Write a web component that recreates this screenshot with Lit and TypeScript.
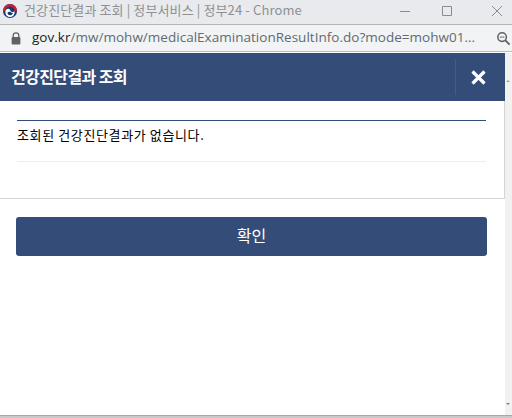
import { LitElement, html, css } from "lit";
import { customElement } from "lit/decorators.js";

@customElement("app-root")
export class AppRoot extends LitElement {
  static styles = css`
    :host { display: flex; flex-direction: column; width: 512px; height: 418px; overflow: hidden; background: #fff; font-family: "Noto Sans CJK KR", "Liberation Sans", sans-serif; }
    .titlebar { height: 24px; flex: none; background: #e8eaed; border-bottom: 1px solid #b4b5b7; display: flex; align-items: center; color: #8e9093; font-size: 13px; box-sizing: content-box; }
    .logo { width: 16px; height: 16px; margin: 0 6px 3px 2px; flex: none; }
    .ttext { flex: 1; white-space: nowrap; letter-spacing: 0.12px; padding-bottom: 6px; }
    .winbtn { width: 16px; height: 16px; flex: none; display: block; margin-bottom: 3px; }
    .min { margin-right: 26px; }
    .max { margin-right: 32px; }
    .cls { margin-right: 7px; }
    .addr { height: 26px; flex: none; background: #f1f3f4; border-bottom: 1px solid #b9babb; display: flex; align-items: center; font-family: "Open Sans", "Liberation Sans", sans-serif; font-size: 13.5px; color: #5f6b73; box-sizing: content-box; }
    .lock { width: 10px; height: 13px; margin: 0 11px 0 11px; flex: none; }
    .url { flex: 1; white-space: nowrap; overflow: hidden; letter-spacing: 0.02px; padding-bottom: 2px; }
    .dom { color: #202124; }
    .zoom { width: 15px; height: 15px; margin-right: 1px; flex: none; }
    .page { flex: 1; min-height: 0; display: flex; background: #fff; padding-top: 1px; }
    .main { flex: 1; min-width: 0; display: flex; flex-direction: column; }
    .side { width: 7px; flex: none; background: #f1f1f1; position: relative; }
    .up { position: absolute; top: 27px; left: 1px; width: 0; height: 0; border: 2.5px solid transparent; border-bottom-color: #a3a3a3; border-top: 0; }
    .down { position: absolute; bottom: 10px; left: 1px; width: 0; height: 0; border: 2.5px solid transparent; border-top-color: #7e7e7e; border-bottom: 0; }
    .card { border-bottom: 1px solid #d4d4d4; border-right: 1px solid #d4d4d4; }
    .head { height: 48px; margin-right: -1px; background: #334c78; display: flex; align-items: center; justify-content: space-between; color: #fff; }
    .head h1 { margin: 0 0 2px 11px; font-size: 16px; font-weight: 700; letter-spacing: -0.6px; }
    .close { width: 50px; height: 36px; border-left: 1px solid #435c88; display: flex; align-items: center; justify-content: center; padding-right: 5px; box-sizing: border-box; }
    .close svg { width: 17px; height: 17px; display: block; }
    .body { padding: 19px 18px 36px 17px; }
    .box { border-top: 1px solid #334c78; border-bottom: 1px solid #eeeeee; height: 40px; font-size: 13px; color: #000; line-height: 27px; box-sizing: content-box; letter-spacing: 0.62px; }
    .foot { padding: 18px 18px 0 16px; }
    button { width: 100%; height: 39px; border: 0; border-radius: 3px; background: #344c78; color: #fff; font: inherit; font-size: 16px; padding: 0 0 3px; }
    .bottom { height: 3px; flex: none; background: #c9c9c9; border-top: 1px solid #a8a8a8; box-sizing: border-box; overflow: hidden; font-size: 13px; font-weight: 700; line-height: 15px; color: #222; padding-left: 10px; white-space: nowrap; }
  `;

  render() {
    return html`
      <div class="titlebar">
        <svg class="logo" viewBox="0 0 16 16">
          <circle cx="8" cy="8" r="7" fill="#173a72"/>
          <path d="M1 8A7 7 0 0 1 15 8L12.6 8A4.6 4.6 0 0 0 3.4 8Z" fill="#c8202f"/>
          <path d="M3.4 8A2.6 2.6 0 0 1 8 6.8 A2.6 2.6 0 0 0 12.6 8 L12.6 9.5 A4.6 4.6 0 0 1 3.4 9.5Z" fill="#fff"/>
          <path d="M5.5 9.5A2.6 2.6 0 0 0 10.8 9.5 A2.2 2.2 0 0 1 8 8.6Z" fill="#173a72"/>
        </svg>
        <span class="ttext">건강진단결과 조회 | 정부서비스 | 정부24 - Chrome</span>
        <svg class="winbtn min" viewBox="0 0 16 16"><path d="M1 8.5H11" stroke="#8a8c8f" fill="none"/></svg>
        <svg class="winbtn max" viewBox="0 0 16 16"><path d="M1.5 3.5H10.5V12.5H1.5Z" stroke="#8a8c8f" fill="none"/></svg>
        <svg class="winbtn cls" viewBox="0 0 16 16"><path d="M3 3L13 13M13 3L3 13" stroke="#8a8c8f" fill="none"/></svg>
      </div>
      <div class="addr">
        <svg class="lock" viewBox="0 0 10 13"><path d="M2.2 5.5V3.6a2.8 2.8 0 0 1 5.6 0V5.5" fill="none" stroke="#5f6368" stroke-width="1.3"/><rect x="0.6" y="5" width="8.8" height="7.6" rx="1" fill="#5f6368"/></svg>
        <span class="url"><span class="dom">gov.kr</span>/mw/mohw/medicalExaminationResultInfo.do?mode=mohw01...</span>
        <svg class="zoom" viewBox="0 0 16 16"><circle cx="6.5" cy="6.5" r="4.6" fill="none" stroke="#5f6368" stroke-width="1.6"/><path d="M4 6.5H9" stroke="#5f6368"/><path d="M10 10L14.5 14.5" stroke="#5f6368" stroke-width="2"/></svg>
      </div>
      <div class="page">
        <div class="main">
          <div class="card">
            <div class="head">
              <h1>건강진단결과 조회</h1>
              <div class="close"><svg viewBox="0 0 17 17"><path d="M2.5 2.5L14.5 14.5M14.5 2.5L2.5 14.5" stroke="#fff" stroke-width="3.2" fill="none"/></svg></div>
            </div>
            <div class="body"><div class="box">조회된 건강진단결과가 없습니다.</div></div>
          </div>
          <div class="foot"><button>확인</button></div>
        </div>
        <div class="side"><i class="up"></i><i class="down"></i></div>
      </div>
      <div class="bottom">동의 후 결과를</div>
    `;
  }
}
